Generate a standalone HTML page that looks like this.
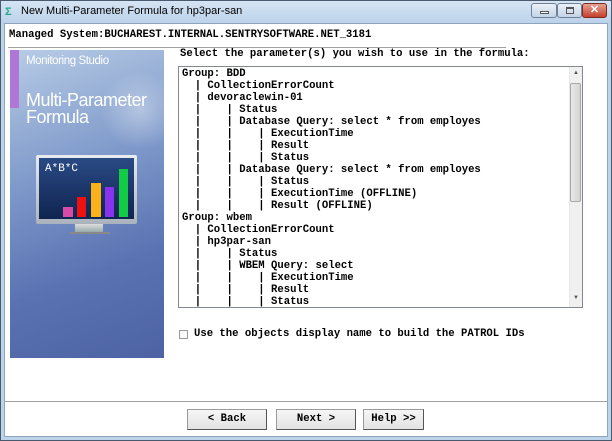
<!DOCTYPE html>
<html><head><style>
*{margin:0;padding:0;box-sizing:border-box}
body{width:612px;height:441px;overflow:hidden;background:#fff;position:relative;font-family:"Liberation Sans",sans-serif}
.abs{position:absolute}
.mono{font-family:"Liberation Mono",monospace;font-weight:bold;font-size:10.6px;color:#000}
.btn{position:absolute;top:409px;height:21px;background:linear-gradient(#f6f6f6,#e3e3e3);border:1px solid #9a9a9a;border-right-color:#555;border-bottom-color:#555;font-family:"Liberation Mono",monospace;font-weight:bold;font-size:10.6px;text-align:center;line-height:19px}
pre{font-family:"Liberation Mono",monospace;font-weight:bold;font-size:10.6px;line-height:12px}
</style></head><body>
<div class="abs" style="left:0;top:0;width:612px;height:441px;background:#bcd3ea;border:1px solid #4a5a6e"></div>
<div class="abs" style="left:1px;top:1px;width:610px;height:22px;background:linear-gradient(#d5e4f4,#bcd2ea)"></div>
<div class="abs" style="left:5px;top:6px;width:12px;height:12px;font-size:11px;color:#2a8;font-weight:bold;line-height:12px">Σ</div>
<div class="abs" style="left:21px;top:5px;font-size:11px;color:#000">New Multi-Parameter Formula for hp3par-san</div>
<div class="abs" style="left:531px;top:3px;width:26px;height:15px;border:1px solid #6f7f95;border-radius:3px;background:linear-gradient(#eaf1f9,#c3d3e6)"><div class="abs" style="left:8px;top:7px;width:9px;height:3px;background:#fff;border:1px solid #555"></div></div>
<div class="abs" style="left:557px;top:3px;width:25px;height:15px;border:1px solid #6f7f95;border-radius:3px;background:linear-gradient(#eaf1f9,#c3d3e6)"><div class="abs" style="left:8px;top:3px;width:8px;height:7px;border:1px solid #555;border-top-width:2px"></div></div>
<div class="abs" style="left:582px;top:3px;width:25px;height:15px;border:1px solid #7a2b20;border-radius:3px;background:linear-gradient(#e8a092,#c4412d);color:#fff;font-weight:bold;font-size:11px;text-align:center;line-height:13px">✕</div>
<div class="abs" style="left:4px;top:23px;width:604px;height:414px;background:#fff;border:1px solid #8ea4bf"></div>
<div class="abs mono" style="left:9px;top:29px">Managed System:BUCHAREST.INTERNAL.SENTRYSOFTWARE.NET_3181</div>
<div class="abs" style="left:8px;top:47px;width:498px;height:1px;background:#a0a0a0"></div>
<div class="abs" style="left:10px;top:50px;width:154px;height:308px;background:linear-gradient(160deg,#b8cce6 0%,#7c97c9 40%,#5a72b2 70%,#4d63a3 100%);overflow:hidden">
<div class="abs" style="left:90px;top:20px;width:80px;height:80px;border-radius:50%;background:radial-gradient(rgba(255,255,255,.35),rgba(255,255,255,0) 70%)"></div>
<div class="abs" style="left:0;top:0;width:9px;height:58px;background:#b076d6"></div>
<div class="abs" style="left:16px;top:5px;color:#fff;font-size:11.5px;letter-spacing:-.4px">Monitoring Studio</div>
<div class="abs" style="left:16px;top:42px;color:#fff;font-size:18px;line-height:17px;letter-spacing:-.5px">Multi-Parameter<br>Formula</div>
<div class="abs" style="left:26px;top:105px;width:101px;height:69px;background:linear-gradient(#e8ecf0,#aab3bd);border-radius:2px"></div>
<div class="abs" style="left:29px;top:108px;width:95px;height:61px;background:linear-gradient(#2a4a85,#0f2450)"></div>
<div class="abs" style="left:35px;top:113px;color:#fff;font-size:11px;font-family:'Liberation Mono',monospace">A*B*C</div>
<div class="abs" style="left:53px;top:157px;width:10px;height:10px;background:#d84aa8"></div>
<div class="abs" style="left:67px;top:147px;width:9px;height:20px;background:#ee1111"></div>
<div class="abs" style="left:81px;top:133px;width:10px;height:34px;background:#fbb11a"></div>
<div class="abs" style="left:95px;top:137px;width:9px;height:30px;background:#8a33ee"></div>
<div class="abs" style="left:109px;top:119px;width:9px;height:48px;background:#11cc44"></div>
<div class="abs" style="left:65px;top:174px;width:28px;height:8px;background:linear-gradient(#ddd,#9aa)"></div>
<div class="abs" style="left:60px;top:182px;width:40px;height:2px;background:#888"></div>
</div>
<div class="abs mono" style="left:180px;top:48px">Select the parameter(s) you wish to use in the formula:</div>
<div class="abs" style="left:178px;top:66px;width:405px;height:242px;border:1px solid #828790;background:#fff;overflow:hidden">
<pre style="position:absolute;left:3px;top:1px">Group: BDD
  | CollectionErrorCount
  | devoraclewin-01
  |    | Status
  |    | Database Query: select * from employes
  |    |    | ExecutionTime
  |    |    | Result
  |    |    | Status
  |    | Database Query: select * from employes
  |    |    | Status
  |    |    | ExecutionTime (OFFLINE)
  |    |    | Result (OFFLINE)
Group: wbem
  | CollectionErrorCount
  | hp3par-san
  |    | Status
  |    | WBEM Query: select
  |    |    | ExecutionTime
  |    |    | Result
  |    |    | Status</pre>
<div class="abs" style="right:0;top:0;width:13px;height:240px;background:#f0f0f0;border-left:1px solid #e8e8e8"></div>
<div class="abs" style="right:3px;top:3px;font-size:6px;color:#555">▲</div>
<div class="abs" style="right:1px;top:16px;width:11px;height:119px;background:linear-gradient(90deg,#e8e8e8,#d4d4d4);border:1px solid #a8a8a8;border-radius:2px"></div>
<div class="abs" style="right:3px;top:228px;font-size:6px;color:#555">▼</div>
</div>
<div class="abs" style="left:179px;top:330px;width:9px;height:9px;border:1px solid #999;background:#fafafa"></div>
<div class="abs mono" style="left:194px;top:328px">Use the objects display name to build the PATROL IDs</div>
<div class="abs" style="left:5px;top:401px;width:602px;height:1px;background:#a0a0a0"></div>
<div class="btn" style="left:187px;width:80px">&lt; Back</div>
<div class="btn" style="left:276px;width:80px">Next &gt;</div>
<div class="btn" style="left:363px;width:61px">Help &gt;&gt;</div>
</body></html>
